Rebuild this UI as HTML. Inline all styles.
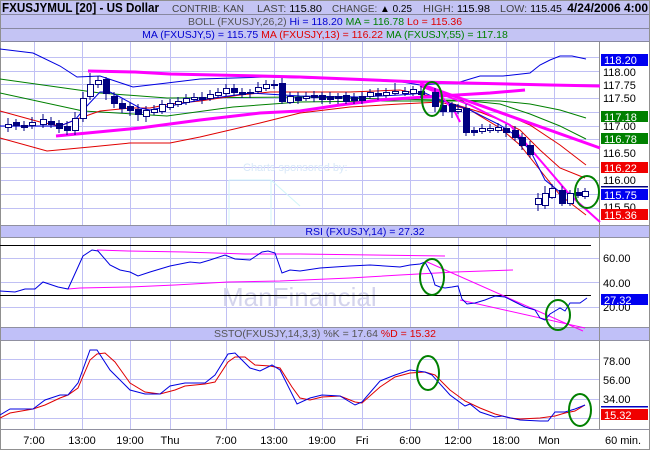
<!DOCTYPE html>
<html><head><meta charset="utf-8"><style>
html,body{margin:0;padding:0;background:#fff}
svg{display:block;font-family:"Liberation Sans",sans-serif}
</style></head><body>
<svg width="650" height="450" viewBox="0 0 650 450" xmlns="http://www.w3.org/2000/svg">
<rect width="650" height="450" fill="#fff"/>
<!-- header bars -->
<rect x="0" y="0" width="650" height="14" fill="#c4c4f4"/>
<rect x="0" y="14" width="650" height="1" fill="#8888a0"/>
<rect x="0" y="15" width="650" height="13" fill="#c4c4f4"/>
<rect x="0" y="28" width="650" height="1" fill="#8888a0"/>
<rect x="0" y="29" width="650" height="12" fill="#c4c4f4"/>
<rect x="0" y="41" width="650" height="1" fill="#8888a0"/>
<text x="2" y="12" font-size="13" font-weight="bold" fill="#000" textLength="157" lengthAdjust="spacingAndGlyphs">FXUSJYMUL [20] - US Dollar</text>
<text x="172" y="12" font-size="10" fill="#444" textLength="72" lengthAdjust="spacingAndGlyphs">CONTRIB: KAN</text>
<text x="257" y="12" font-size="10" fill="#444" textLength="65" lengthAdjust="spacingAndGlyphs">LAST: <tspan fill="#000">115.80</tspan></text>
<text x="332" y="12" font-size="10" fill="#444" textLength="80" lengthAdjust="spacingAndGlyphs">CHANGE: <tspan fill="#000">▲ 0.25</tspan></text>
<text x="423" y="12" font-size="10" fill="#444" textLength="67" lengthAdjust="spacingAndGlyphs">HIGH: <tspan fill="#000">115.98</tspan></text>
<text x="500" y="12" font-size="10" fill="#444" textLength="62" lengthAdjust="spacingAndGlyphs">LOW: <tspan fill="#000">115.45</tspan></text>
<text x="648" y="12" font-size="12" font-weight="bold" fill="#000" text-anchor="end">4/24/2006 4:00</text>
<text x="325" y="25" font-size="10.5" text-anchor="middle" fill="#555">BOLL (FXUSJY,26,2) <tspan fill="#0000d0">Hi = 118.20</tspan> <tspan fill="#008000">MA = 116.78</tspan> <tspan fill="#e00000">Lo = 115.36</tspan></text>
<text x="325" y="38" font-size="10.5" text-anchor="middle" fill="#0000d0">MA (FXUSJY,5) = 115.75 <tspan fill="#e00000">MA (FXUSJY,13) = 116.22</tspan> <tspan fill="#008000">MA (FXUSJY,55) = 117.18</tspan></text>

<!-- grid -->
<g stroke="#c0c0f4" stroke-width="1">
<path d="M34.5 42V429M82.5 42V429M130.5 42V429M170.5 42V429M226.5 42V429M274.5 42V429M322.5 42V429M362.5 42V429M410.5 42V429M458.5 42V429M506.5 42V429M554.5 42V429"/>
<path d="M0 57.5H599M0 71.5H599M0 84.5H599M0 98.5H599M0 112.5H599M0 126.5H599M0 139.5H599M0 153.5H599M0 167.5H599M0 180.5H599M0 194.5H599M0 208.5H599"/>
<path d="M0 258.5H599M0 282.5H599M0 307.5H599"/>
<path d="M0 359.5H599M0 379.5H599M0 399.5H599M0 418.5H599"/>
</g>
<!-- watermark -->
<text x="243" y="171" font-size="11" fill="#d8e8f8">Charts sponsored by:</text>
<path d="M229 180V225M229 180H271L300 206M271 180V225" stroke="#d0f4f8" fill="none"/>
<text x="222" y="306" font-size="26" fill="#d4d4ec">ManFinancial</text>

<!-- panel separators -->
<rect x="0" y="225" width="650" height="13" fill="#c0c0f8"/>
<path d="M0 225.5H650M0 237.5H650" stroke="#9090a0"/>
<text x="365" y="235" font-size="10.5" text-anchor="middle" fill="#0000d0">RSI (FXUSJY,14) = 27.32</text>
<rect x="0" y="327" width="650" height="13" fill="#c0c0f8"/>
<path d="M0 327.5H650M0 340.5H650" stroke="#9090a0"/>
<text x="325" y="337" font-size="10.5" text-anchor="middle" fill="#555">SSTO(FXUSJY,14,3,3) %K = 17.64 <tspan fill="#e00000">%D = 15.32</tspan></text>
<path d="M0 429.5H650" stroke="#9090a0"/>
<path d="M599.5 42V429" stroke="#909090"/>
<rect x="0.5" y="0.5" width="649" height="449" fill="none" stroke="#909090"/>

<!-- main chart lines -->
<g fill="none" stroke-width="1">
<polyline stroke="#0000e0" points="0,49 33,53 60,66 77,77 100,76 133,87 167,83 200,79 267,77 300,78 390,80 420,85 460,82 480,76 503,76 530,73 540,65 550,60 560,56 572,56 586,59"/>
<polyline stroke="#008000" points="0,79 100,93 167,98 300,97 390,99 440,100 500,101 530,104 560,110 586,118"/>
<polyline stroke="#008000" points="0,93 83,111 167,116 233,107 300,102 380,101 470,101 500,104 530,114 560,126 586,139"/>
<polyline stroke="#e00000" points="0,111 40,122 60,126 80,118 100,111 130,108 150,108 170,104 200,101 240,95 270,92 300,92 350,92 400,90 430,96 450,103 480,112 500,120 520,130 540,150 560,168 585,178"/>
<polyline stroke="#e00000" points="0,138 47,151 90,147 130,143 170,143 200,137 260,123 300,113 350,107 400,104 440,102 470,110 500,128 520,145 540,170 560,195 586,215"/>
<polyline stroke="#e00000" points="500,112 530,125 560,145 586,165"/>
<polyline stroke="#0000e0" points="0,126 60,126 75,120 85,108 100,92 110,92 120,97 140,108 150,110 170,106 200,100 250,93 300,96 360,97 400,95 425,93 440,100 470,110 500,125 515,135 530,150 545,180 560,192 575,194 586,194"/>
<polyline stroke="#ff00ff" stroke-width="3" points="88,71 135,72 170,74 260,76 300,77 420,82 550,85 600,86"/>
<polyline stroke="#ff00ff" stroke-width="3" points="56,136 140,128 200,120 260,113 300,111 340,105 380,100 440,96 490,93 525,90"/>
<polyline stroke="#ff00ff" stroke-width="3" points="420,84 600,148"/>
<polyline stroke="#ff00ff" stroke-width="2" points="420,86 470,105 510,125 540,160 570,195 600,222"/>
<polyline stroke="#ff00ff" stroke-width="2" points="440,95 455,112 460,122"/>
</g>
<!-- candles -->
<g stroke="#000080" stroke-width="1">
<path d="M8 118V132M16 119V130M24 121V131M32 117V129M43 114V128M51 117V128M59 120V133M67 121V135M75 112V135M83 92V122M90 73V100M98 76V88M106 77V100M114 92V108M122 99V113M130 102V116M138 104V121M146 106V122M154 105V115M162 100V114M170 99V110M178 97V107M186 94V105M194 93V102M202 92V104M210 90V101M218 88V98M226 84V96M234 84V96M242 88V98M250 89V98M258 82V94M266 80V91M274 80V89M282 78V104M290 92V104M298 92V104M306 92V101M314 91V102M322 92V104M330 92V104M338 93V104M346 92V104M354 93V104M362 92V104M370 89V99M378 88V100M386 88V98M395 83V95M405 87V96M413 86V96M421 86V98M435 88V112M443 100V116M452 102V118M458 104V114M466 104V136M474 127V136M482 124V134M490 124V133M498 123V133M506 124V137M515 126V141M522 133V150M530 141V158M538 193V211M545 186V209M552 184V199M562 186V206M570 190V206M578 188V198M585 188V199"/>
</g>
<g stroke="#000080" stroke-width="1" fill="#fff">
<rect x="5.5" y="124.5" width="6" height="3" /><rect x="29.5" y="122.5" width="6" height="3"/><rect x="40.5" y="119.5" width="6" height="5"/><rect x="72.5" y="118.5" width="6" height="12"/><rect x="80.5" y="98.5" width="6" height="20"/><rect x="87.5" y="84.5" width="6" height="12"/><rect x="95.5" y="80.5" width="6" height="4"/><rect x="143.5" y="110.5" width="6" height="6"/><rect x="151.5" y="109.5" width="6" height="3"/><rect x="159.5" y="104.5" width="6" height="7"/><rect x="167.5" y="103.5" width="6" height="4"/><rect x="175.5" y="101.5" width="6" height="3"/><rect x="183.5" y="98.5" width="6" height="4"/><rect x="191.5" y="97.5" width="6" height="2"/><rect x="207.5" y="94.5" width="6" height="4"/><rect x="215.5" y="92.5" width="6" height="3"/><rect x="223.5" y="88.5" width="6" height="5"/><rect x="255.5" y="87.5" width="6" height="4"/><rect x="263.5" y="84.5" width="6" height="4"/><rect x="287.5" y="96.5" width="6" height="6"/><rect x="303.5" y="96.5" width="6" height="2"/><rect x="367.5" y="92.5" width="6" height="4"/><rect x="383.5" y="92.5" width="6" height="3"/><rect x="392.5" y="91.5" width="6" height="2"/><rect x="402.5" y="91.5" width="6" height="2"/><rect x="410.5" y="89.5" width="6" height="4"/><rect x="455.5" y="109.5" width="6" height="2"/><rect x="479.5" y="128.5" width="6" height="3"/><rect x="487.5" y="128.5" width="6" height="2"/><rect x="495.5" y="127.5" width="6" height="3"/><rect x="535.5" y="198.5" width="6" height="6"/><rect x="542.5" y="193.5" width="6" height="12"/><rect x="549.5" y="188.5" width="6" height="9"/><rect x="567.5" y="193.5" width="6" height="10"/><rect x="582.5" y="191.5" width="6" height="5"/>
</g>
<g fill="#000080">
<rect x="13" y="122" width="7" height="4"/><rect x="21" y="125" width="7" height="3"/><rect x="48" y="121" width="7" height="4"/><rect x="56" y="123" width="7" height="6"/><rect x="64" y="126" width="7" height="5"/><rect x="103" y="79" width="7" height="15"/><rect x="111" y="96" width="7" height="8"/><rect x="119" y="103" width="7" height="6"/><rect x="127" y="106" width="7" height="5"/><rect x="135" y="109" width="7" height="6"/><rect x="199" y="97" width="7" height="3"/><rect x="231" y="88" width="7" height="5"/><rect x="239" y="92" width="7" height="3"/><rect x="247" y="92" width="7" height="2"/><rect x="271" y="84" width="7" height="2"/><rect x="279" y="83" width="7" height="19"/><rect x="295" y="97" width="7" height="4"/><rect x="311" y="95" width="7" height="3"/><rect x="319" y="95" width="7" height="5"/><rect x="327" y="96" width="7" height="4"/><rect x="335" y="96" width="7" height="3"/><rect x="343" y="95" width="7" height="7"/><rect x="351" y="97" width="7" height="4"/><rect x="359" y="96" width="7" height="5"/><rect x="375" y="93" width="7" height="3"/><rect x="418" y="91" width="7" height="4"/><rect x="432" y="92" width="7" height="15"/><rect x="440" y="105" width="7" height="7"/><rect x="449" y="104" width="7" height="8"/><rect x="463" y="108" width="7" height="25"/><rect x="471" y="130" width="7" height="3"/><rect x="503" y="128" width="7" height="5"/><rect x="512" y="130" width="7" height="8"/><rect x="519" y="137" width="7" height="9"/><rect x="527" y="145" width="7" height="10"/><rect x="559" y="190" width="7" height="14"/><rect x="575" y="192" width="7" height="4"/>
</g>

<!-- RSI -->
<path d="M0 245.5H591M0 295.5H591" stroke="#000" stroke-width="1"/>
<g fill="none">
<polyline stroke="#ff00ff" points="97,250 128,251 185,252 245,254 300,254 445,256"/>
<polyline stroke="#ff00ff" points="68,289 80,288 130,287 175,285 228,282 280,281 350,278 400,275 455,272 513,270"/>
<polyline stroke="#ff00ff" points="425,261 583,331"/>
<polyline stroke="#ff00ff" points="460,300 585,328"/>
<polyline stroke="#0000e0" points="0,291 15,292 25,289 35,289 43,282 58,287 68,289 83,256 92,250 98,251 110,265 120,270 130,272 138,276 150,272 170,266 190,262 200,263 210,260 225,255 235,259 250,260 262,252 268,251 275,253 282,273 290,270 300,271 320,268 350,266 370,265 400,267 410,265 420,264 425,262 432,275 435,285 440,287 445,288 452,287 458,286 462,299 467,304 475,303 485,300 495,296 505,297 515,302 525,307 535,310 540,318 545,320 550,314 555,311 560,308 565,311 570,303 580,303 587,298"/>
</g>
<!-- SSTO -->
<g fill="none">
<polyline stroke="#e00000" points="0,418 10,413 33,409 45,405 60,398 68,395 78,388 90,360 97,354 105,353 115,362 130,383 145,392 160,394 175,390 185,386 205,384 215,382 228,362 235,357 245,357 255,365 270,366 280,368 292,387 300,398 310,400 322,397 340,396 355,402 362,403 380,387 395,377 410,373 425,372 435,375 450,390 465,401 480,408 495,414 510,418 520,419 540,418 555,416 565,413 575,411 585,405"/>
<polyline stroke="#0000e0" points="0,415 10,409 33,409 45,400 60,395 68,395 78,383 90,350 97,350 110,370 130,390 145,394 160,394 170,386 185,383 205,383 215,375 228,354 235,353 250,368 260,371 272,365 280,370 297,404 310,398 322,395 340,396 355,405 362,402 380,381 395,375 410,370 425,372 432,375 450,395 465,406 470,404 480,412 495,417 502,416 520,420 540,421 548,421 555,412 565,412 575,409 585,405"/>
</g>

<!-- green circles -->
<g fill="none" stroke="#008000" stroke-width="2">
<ellipse cx="432" cy="99" rx="10" ry="17"/>
<ellipse cx="587" cy="192" rx="12" ry="16"/>
<ellipse cx="432" cy="277" rx="12" ry="18"/>
<ellipse cx="558" cy="315" rx="12" ry="15"/>
<ellipse cx="428" cy="373" rx="11" ry="17"/>
<ellipse cx="580" cy="410" rx="11" ry="16"/>
</g>

<!-- right axis labels -->
<g font-size="11" fill="#000">
<text x="603" y="76">118.00</text>
<text x="603" y="89">117.75</text>
<text x="603" y="102">117.50</text>
<text x="603" y="130">117.00</text>
<text x="603" y="157">116.50</text>
<text x="603" y="184">116.00</text>
<text x="603" y="211">115.50</text>
<text x="603" y="262">60.00</text>
<text x="603" y="287">40.00</text>
<text x="603" y="311">20.00</text>
<text x="603" y="365">78.00</text>
<text x="603" y="384">56.00</text>
<text x="603" y="403">34.00</text>
</g>
<g font-size="11" fill="#fff">
<rect x="601" y="54" width="47" height="12" fill="#0000f0"/><text x="604" y="64">118.20</text>
<rect x="601" y="111" width="47" height="11" fill="#008000"/><text x="604" y="121">117.18</text>
<rect x="601" y="133" width="47" height="11" fill="#008000"/><text x="604" y="143">116.78</text>
<rect x="601" y="162" width="47" height="11" fill="#f00000"/><text x="604" y="172">116.22</text>
<rect x="601" y="186" width="47" height="1.5" fill="#000080"/>
<rect x="601" y="189" width="47" height="11" fill="#0000f0"/><text x="604" y="199">115.75</text>
<rect x="601" y="209" width="47" height="11" fill="#f00000"/><text x="604" y="219">115.36</text>
<rect x="601" y="294" width="47" height="11" fill="#0000f0"/><text x="604" y="304">27.32</text>
<rect x="601" y="406" width="47" height="1.5" fill="#0000c0"/>
<rect x="601" y="409" width="47" height="11" fill="#f00000"/><text x="604" y="419">15.32</text>
</g>
<!-- time axis -->
<g font-size="11" fill="#000" text-anchor="middle">
<text x="34" y="444">7:00</text><text x="82" y="444">13:00</text><text x="130" y="444">19:00</text><text x="170" y="444">Thu</text><text x="226" y="444">7:00</text><text x="274" y="444">13:00</text><text x="322" y="444">19:00</text><text x="362" y="444">Fri</text><text x="410" y="444">6:00</text><text x="458" y="444">12:00</text><text x="506" y="444">18:00</text><text x="549" y="444">Mon</text><text x="623" y="444">60 min.</text>
</g>
</svg>
</body></html>
